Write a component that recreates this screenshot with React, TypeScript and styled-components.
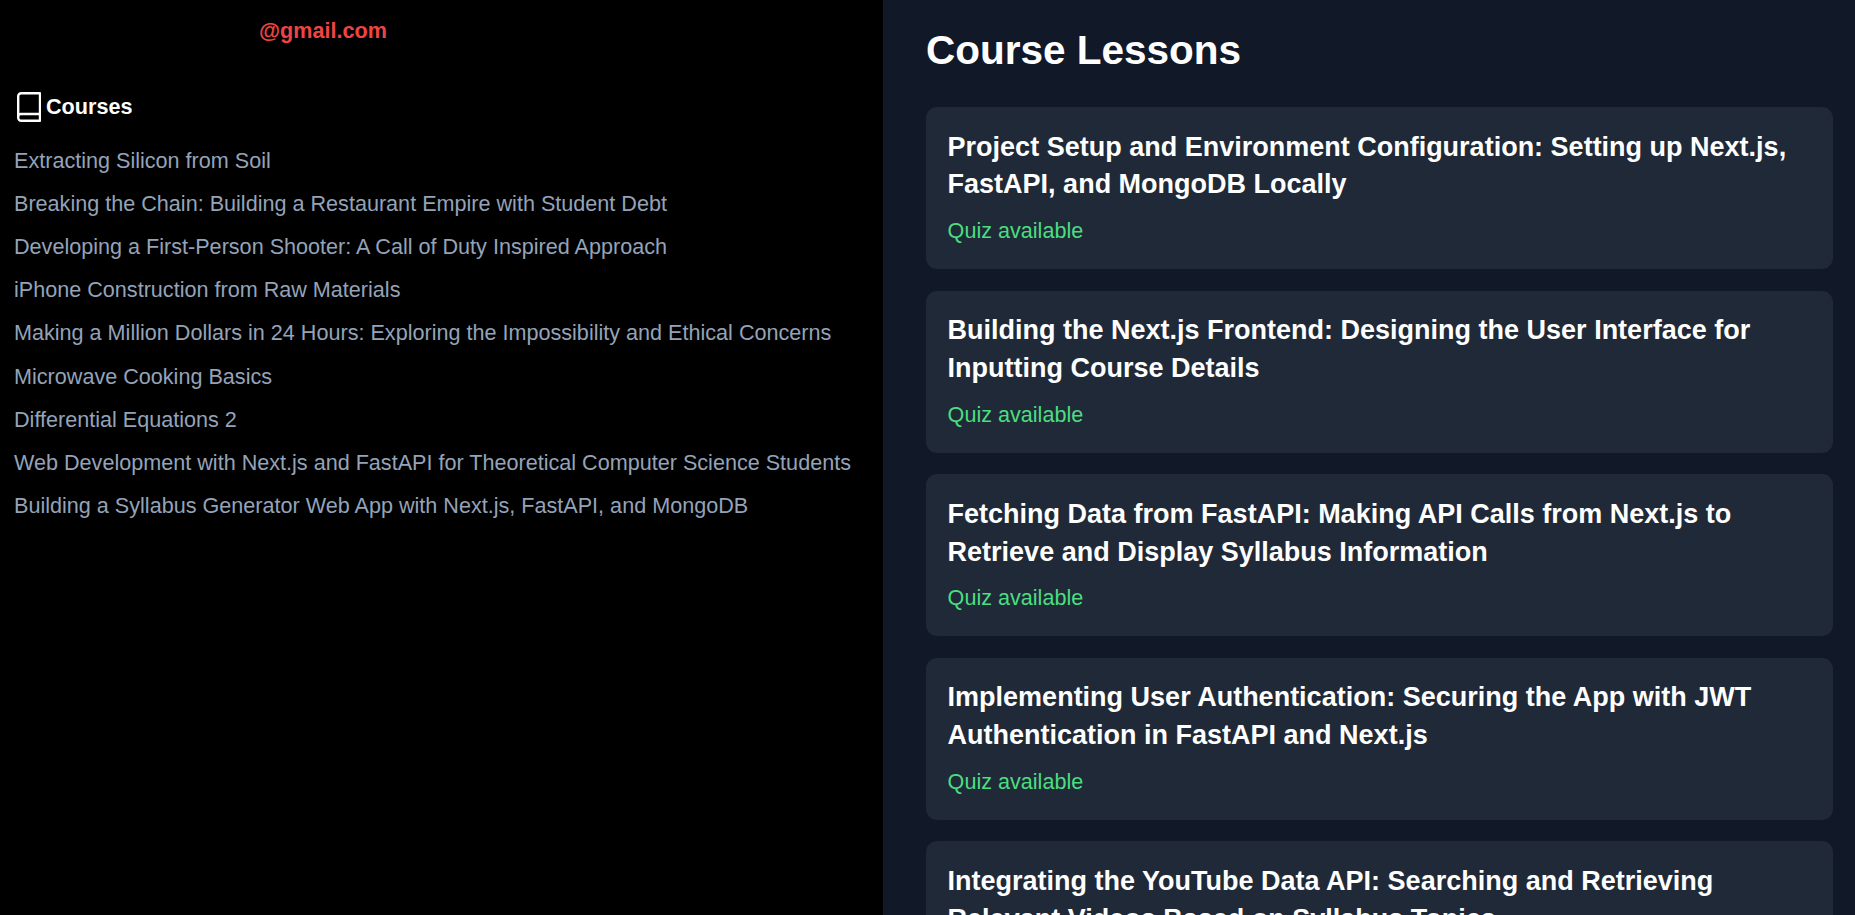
import React from "react";
import styled, { createGlobalStyle } from "styled-components";

const courses = [
  "Extracting Silicon from Soil",
  "Breaking the Chain: Building a Restaurant Empire with Student Debt",
  "Developing a First-Person Shooter: A Call of Duty Inspired Approach",
  "iPhone Construction from Raw Materials",
  "Making a Million Dollars in 24 Hours: Exploring the Impossibility and Ethical Concerns",
  "Microwave Cooking Basics",
  "Differential Equations 2",
  "Web Development with Next.js and FastAPI for Theoretical Computer Science Students",
  "Building a Syllabus Generator Web App with Next.js, FastAPI, and MongoDB",
];

const lessons = [
  "Project Setup and Environment Configuration: Setting up Next.js, FastAPI, and MongoDB Locally",
  "Building the Next.js Frontend: Designing the User Interface for Inputting Course Details",
  "Fetching Data from FastAPI: Making API Calls from Next.js to Retrieve and Display Syllabus Information",
  "Implementing User Authentication: Securing the App with JWT Authentication in FastAPI and Next.js",
  "Integrating the YouTube Data API: Searching and Retrieving Relevant Videos Based on Syllabus Topics",
];

const BookIcon = () => (
  <BookSvg viewBox="0 0 24 30" fill="none" stroke="currentColor" strokeWidth="2.4">
    <path d="M4.2 1.2H23v27.6H4.2a3 3 0 0 1-3-3V4.2a3 3 0 0 1 3-3Z" strokeLinejoin="round" />
    <path d="M1.2 24.5a2.5 2.5 0 0 1 2.5-2.5H23" />
  </BookSvg>
);

export default function App() {
  return (
    <Page>
      <GlobalStyle />
      <Sidebar>
        <Email>@gmail.com</Email>
        <CoursesHeading>
          <BookIcon />
          <span>Courses</span>
        </CoursesHeading>
        <CourseList>
          {courses.map((c) => (
            <CourseItem key={c}>{c}</CourseItem>
          ))}
        </CourseList>
      </Sidebar>
      <Main>
        <Title>Course Lessons</Title>
        <LessonList>
          {lessons.map((l) => (
            <LessonCard key={l}>
              <LessonTitle>{l}</LessonTitle>
              <QuizTag>Quiz available</QuizTag>
            </LessonCard>
          ))}
        </LessonList>
      </Main>
    </Page>
  );
}

const GlobalStyle = createGlobalStyle`
  html, body {
    margin: 0;
    height: 100%;
    overflow: hidden;
    background: #000;
    font-family: "Liberation Sans", Arial, sans-serif;
  }
`;

const Page = styled.div`
  display: flex;
  height: 915px;
  overflow: hidden;
`;

const Sidebar = styled.aside`
  width: 883px;
  flex-shrink: 0;
  background: #000;
  padding: 17px 14px;
  box-sizing: border-box;
`;

const Email = styled.div`
  padding-left: 245px;
  color: #ef4444;
  font-size: 21.6px;
  font-weight: 700;
  line-height: 28px;
`;

const CoursesHeading = styled.div`
  display: flex;
  align-items: center;
  gap: 5px;
  margin-top: 47px;
  padding-left: 3px;
  color: #fff;
  font-size: 21.6px;
  font-weight: 700;
`;

const BookSvg = styled.svg`
  width: 24px;
  height: 30px;
  flex-shrink: 0;
`;

const CourseList = styled.ul`
  list-style: none;
  margin: 22.5px 0 0;
  padding: 0;
  display: flex;
  flex-direction: column;
  gap: 10.8px;
`;

const CourseItem = styled.li`
  color: #94a3b8;
  font-size: 21.6px;
  line-height: 32.4px;
`;

const Main = styled.main`
  flex: 1;
  background: #111827;
  padding: 22px 22px 0 43px;
  box-sizing: border-box;
`;

const Title = styled.h1`
  margin: 0;
  color: #fff;
  font-size: 40.5px;
  font-weight: 700;
  line-height: 56px;
`;

const LessonList = styled.div`
  display: flex;
  flex-direction: column;
  gap: 21.6px;
  margin-top: 29px;
`;

const LessonCard = styled.div`
  background: #1f2937;
  border-radius: 11px;
  padding: 21.6px;
`;

const LessonTitle = styled.h2`
  margin: 0;
  color: #fff;
  font-size: 27px;
  font-weight: 700;
  line-height: 37.8px;
`;

const QuizTag = styled.p`
  margin: 10.8px 0 0;
  color: #4ade80;
  font-size: 21.6px;
  line-height: 32.4px;
`;
